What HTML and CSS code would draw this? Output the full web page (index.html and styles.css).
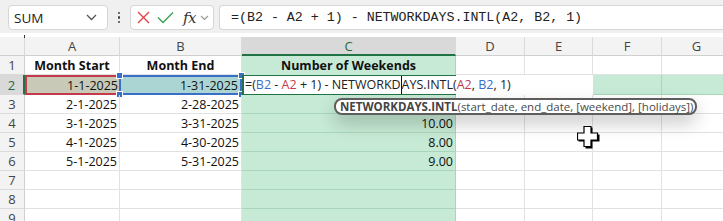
FILE: index.html
```html
<!DOCTYPE html>
<html>
<head>
<meta charset="utf-8">
<link rel="stylesheet" href="styles.css">
</head>
<body>
<div class="toolbar">
  <div class="namebox">
    <span class="name">SUM</span>
    <svg class="chev" width="11" height="7" viewBox="0 0 11 7"><path d="M1 1 L5.5 5.5 L10 1" fill="none" stroke="#555" stroke-width="1.3"/></svg>
  </div>
  <div class="dots"><i></i><i></i><i></i></div>
  <div class="fxbox">
    <svg class="ico" width="13" height="13" viewBox="0 0 13 13"><path d="M1 1 L12 12 M12 1 L1 12" stroke="#e0454a" stroke-width="1.4" fill="none"/></svg>
    <svg class="ico" width="17" height="13" viewBox="0 0 17 13"><path d="M1 6.5 L6 11.5 L16 1.5" stroke="#3aa24f" stroke-width="1.4" fill="none"/></svg>
    <span class="fx">fx</span>
    <svg class="chev2" width="9" height="6" viewBox="0 0 9 6"><path d="M1 1 L4.5 4.5 L8 1" fill="none" stroke="#999" stroke-width="1.2"/></svg>
  </div>
  <div class="formulabox">=(B2 - A2 + 1) - NETWORKDAYS.INTL(A2, B2, 1)</div>
</div>
<div class="strip"><i class="tick"></i></div>
<div class="sheet">
  <div class="corner"></div>
  <div class="ch">A</div><div class="ch">B</div><div class="ch sel">C</div><div class="ch">D</div><div class="ch">E</div><div class="ch">F</div><div class="ch">G</div>

  <div class="rh">1</div>
  <div class="c b ctr">Month Start</div><div class="c b ctr">Month End</div><div class="c b ctr green c1">Number of Weekends</div><div class="c"></div><div class="c"></div><div class="c"></div><div class="c"></div>

  <div class="rh rsel">2</div>
  <div class="c r refa">1-1-2025</div>
  <div class="c r refb">1-31-2025<i class="h tl"></i><i class="h tr"></i><i class="h bl"></i><i class="h br"></i></div>
  <div class="c active">
    <div class="editor">=(<span class="blue">B2</span> - <span class="red">A2</span> + 1) - NETWORKD<span class="caret"></span>AYS.INTL(<span class="red">A2</span>, <span class="blue">B2</span>, 1)</div>
  </div>
  <div class="c nob"></div><div class="c nob"></div><div class="c green"></div><div class="c green"></div>

  <div class="rh">3</div>
  <div class="c r">2-1-2025</div><div class="c r">2-28-2025</div><div class="c r green"></div><div class="c"></div><div class="c"></div><div class="c"></div><div class="c"></div>

  <div class="rh">4</div>
  <div class="c r">3-1-2025</div><div class="c r">3-31-2025</div><div class="c r green">10.00</div><div class="c"></div><div class="c"></div><div class="c"></div><div class="c"></div>

  <div class="rh">5</div>
  <div class="c r">4-1-2025</div><div class="c r">4-30-2025</div><div class="c r green">8.00</div><div class="c"></div><div class="c"></div><div class="c"></div><div class="c"></div>

  <div class="rh">6</div>
  <div class="c r">5-1-2025</div><div class="c r">5-31-2025</div><div class="c r green">9.00</div><div class="c"></div><div class="c"></div><div class="c"></div><div class="c"></div>

  <div class="rh">7</div>
  <div class="c"></div><div class="c"></div><div class="c green"></div><div class="c"></div><div class="c"></div><div class="c"></div><div class="c"></div>

  <div class="rh">8</div>
  <div class="c"></div><div class="c"></div><div class="c green"></div><div class="c"></div><div class="c"></div><div class="c"></div><div class="c"></div>

  <div class="rh">9</div>
  <div class="c"></div><div class="c"></div><div class="c green"></div><div class="c"></div><div class="c"></div><div class="c"></div><div class="c"></div>
</div>

<div class="tooltip"><b>NETWORKDAYS.INTL</b>(start_date, end_date, [weekend], [holidays])</div>

<svg class="cursor" width="24" height="24" viewBox="0 0 24 24">
  <polygon points="8.5,1.5 15.5,1.5 15.5,8.5 22.5,8.5 22.5,15.5 15.5,15.5 15.5,22.5 8.5,22.5 8.5,15.5 1.5,15.5 1.5,8.5 8.5,8.5" fill="#000"/>
  <polygon points="7,0.5 14,0.5 14,7 20.5,7 20.5,14 14,14 14,20.5 7,20.5 7,14 0.5,14 0.5,7 7,7" fill="#fff" stroke="#000" stroke-width="1.2"/>
</svg>
</body>
</html>
```

FILE: styles.css
```css
html, body {
  margin: 0;
  padding: 0;
  background: #fff;
  overflow: hidden;
  width: 723px;
  height: 221px;
}
body {
  font-family: "Open Sans", "Liberation Sans", sans-serif;
  position: relative;
  color: #222;
}
.toolbar {
  height: 33px;
  background: #f0f0f0;
  display: flex;
  align-items: flex-start;
  padding: 5px 0 0 8px;
  box-sizing: border-box;
  white-space: nowrap;
  overflow: hidden;
}
.toolbar > * { flex: none; }
.namebox {
  width: 100px;
  height: 25px;
  box-sizing: border-box;
  background: #fff;
  border: 1px solid #d6d6d6;
  border-radius: 4px;
  display: flex;
  align-items: center;
  padding: 0 10px 0 5px;
  justify-content: space-between;
}
.name {
  font-size: 13.5px;
  color: #222;
}
.dots {
  width: 22px;
  height: 25px;
  display: flex;
  flex-direction: column;
  align-items: center;
  justify-content: center;
  gap: 2px;
}
.dots i {
  width: 2.5px;
  height: 2.5px;
  background: #444;
  border-radius: 50%;
}
.fxbox {
  width: 84px;
  height: 25px;
  box-sizing: border-box;
  background: #fff;
  border: 1px solid #d6d6d6;
  border-radius: 4px;
  display: flex;
  align-items: center;
  padding-left: 6px;
  gap: 7px;
}
.fx {
  font-family: "DejaVu Serif", "Liberation Serif", serif;
  font-style: italic;
  font-size: 15px;
  color: #333;
  margin-left: 2px;
  letter-spacing: -0.5px;
}
.chev2 { margin-left: -3px; }
.formulabox {
  margin-left: 5px;
  width: 520px;
  height: 25px;
  box-sizing: border-box;
  background: #fff;
  border: 1px solid #d6d6d6;
  border-right: none;
  border-radius: 4px 0 0 4px;
  font-family: "Liberation Mono", monospace;
  font-size: 13.3px;
  line-height: 23px;
  padding-left: 11px;
  color: #222;
}
.strip {
  height: 4px;
  background: #fff;
  position: relative;
}
.tick {
  position: absolute;
  left: 24px;
  top: 2px;
  width: 1px;
  height: 3px;
  background: #333;
}
.sheet {
  display: grid;
  grid-template-columns: 25px 95px 122px 214px 69px 68px 69px 70px;
  grid-template-rows: 19px 19px 20px 19px 19px 19px 19px 19px 19px 19px;
  font-size: 12.5px;
}
.corner, .ch {
  background: #f3f3f3;
  border-right: 1px solid #dadada;
  border-bottom: 1px solid #cfcfcf;
  box-sizing: border-box;
}
.ch {
  font-size: 13px;
  color: #444;
  display: flex;
  align-items: center;
  justify-content: center;
}
.ch.sel {
  background: #d9d9d9;
  color: #1e6b40;
  border-bottom: 2px solid #217346;
}
.rh {
  background: #f3f3f3;
  border-right: 1px solid #cfcfcf;
  border-bottom: 1px solid #dadada;
  box-sizing: border-box;
  font-size: 13px;
  color: #444;
  display: flex;
  align-items: center;
  justify-content: center;
}
.rh.rsel {
  background: #d9d9d9;
  color: #1e6b40;
  border-right: 2px solid #217346;
}
.c {
  border-right: 1px solid #e1e1e1;
  border-bottom: 1px solid #e1e1e1;
  box-sizing: border-box;
  display: flex;
  align-items: center;
  padding: 0 2px;
  white-space: nowrap;
  position: relative;
  color: #111;
}
.c.b { font-weight: bold; }
.c.ctr { justify-content: center; }
.c.r { justify-content: flex-end; }
.c.green {
  background: #c6ead5;
  border-right-color: #a9d6ba;
  border-bottom-color: #a9d6ba;
}
.c.c1 {
  border-bottom: none;
}
.c.refa {
  background: #c8c9b7;
  border: 2px solid #c43a4b;
  border-right: none;
  padding-right: 2px;
}
.c.refb {
  background: #abd5d2;
  border: 2px solid #3a6fc8;
  margin-left: -1px;
  padding-right: 2px;
}
.h {
  position: absolute;
  width: 5px;
  height: 5px;
  background: #3a6fc8;
  border: 1px solid #fff;
  box-sizing: content-box;
}
.h.tl { left: -5px; top: -5px; }
.h.tr { right: -5px; top: -5px; }
.h.bl { left: -5px; bottom: -5px; }
.h.br { right: -5px; bottom: -5px; }
.c.active {
  border: 2px solid #217346;
  border-right: none;
  padding: 0;
  z-index: 2;
  overflow: visible;
}
.c.nob {
  border-right: none;
  border-bottom-color: #fff;
}
.editor {
  position: absolute;
  left: 0;
  top: -1px;
  height: 18px;
  width: 348px;
  background: #fff;
  font-size: 12.5px;
  line-height: 18px;
  color: #222;
  padding-left: 1px;
  z-index: 3;
}
.blue { color: #3a6fc8; }
.red { color: #c43a4b; }
.caret {
  display: inline-block;
  width: 1px;
  height: 18px;
  background: #111;
  vertical-align: top;
}
.tooltip {
  position: absolute;
  left: 334px;
  top: 98px;
  width: 363px;
  height: 17px;
  box-sizing: border-box;
  border: 2px solid #5d5d5d;
  border-radius: 8px;
  background: #fff;
  font-size: 11.5px;
  line-height: 13px;
  padding-left: 4px;
  color: #4a4a4a;
  white-space: nowrap;
  box-shadow: 0 8px 18px rgba(0,0,0,0.22);
  z-index: 5;
}
.tooltip b { color: #444; }
.cursor {
  position: absolute;
  left: 577px;
  top: 126px;
  z-index: 6;
}
```
